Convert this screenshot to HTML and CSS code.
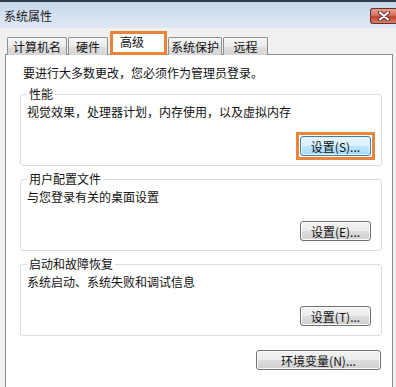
FILE: index.html
```html
<!DOCTYPE html>
<html lang="zh-CN">

<head>
    <meta charset="UTF-8">
    <meta name="viewport" content="width=device-width, initial-scale=1.0">
    <title>系统属性</title>
    <link rel="stylesheet" href="styles.css">
</head>

<body>
    <div class="window">
        <div class="titlebar">
            <span class="title">系统属性</span>
            <button class="close" type="button">
                <svg width="14" height="10" viewBox="0 0 14 10">
                    <path d="M3 1.5 L11 8.5 M11 1.5 L3 8.5" stroke="#5a2a26" stroke-width="4" stroke-linecap="round" />
                    <path d="M3 1.5 L11 8.5 M11 1.5 L3 8.5" stroke="#ffffff" stroke-width="2.2" stroke-linecap="round" />
                </svg>
            </button>
        </div>

        <div class="body">
            <div class="tabs">
                <div class="tab tab-name">计算机名</div>
                <div class="tab tab-hw">硬件</div>
                <div class="tab tab-adv active">高级</div>
                <div class="tab tab-prot">系统保护</div>
                <div class="tab tab-remote">远程</div>
            </div>

            <div class="panel">
                <p class="intro">要进行大多数更改，您必须作为管理员登录。</p>

                <fieldset class="group">
                    <legend>性能</legend>
                    <p class="desc">视觉效果，处理器计划，内存使用，以及虚拟内存</p>
                    <div class="actions">
                        <span class="focus-ring">
                            <button type="button" class="btn focused">设置(S)...</button>
                        </span>
                    </div>
                </fieldset>

                <fieldset class="group">
                    <legend>用户配置文件</legend>
                    <p class="desc">与您登录有关的桌面设置</p>
                    <div class="actions">
                        <button type="button" class="btn">设置(E)...</button>
                    </div>
                </fieldset>

                <fieldset class="group group-last">
                    <legend>启动和故障恢复</legend>
                    <p class="desc">系统启动、系统失败和调试信息</p>
                    <div class="actions">
                        <button type="button" class="btn">设置(T)...</button>
                    </div>
                </fieldset>

                <div class="env">
                    <button type="button" class="btn btn-wide">环境变量(N)...</button>
                </div>
            </div>
        </div>
    </div>
</body>

</html>
```

FILE: styles.css
```css
html, body {
    margin: 0;
    padding: 0;
}

body {
    font-family: "Noto Sans CJK SC", "Liberation Sans", sans-serif;
    font-size: 12px;
    color: #111;
    background: #f0f0f0;
    width: 396px;
    height: 387px;
    overflow: hidden;
}

.window {
    height: 387px;
    display: flex;
    flex-direction: column;
}

.titlebar {
    height: 26px;
    border-top: 2px solid #2c3b4c;
    background: linear-gradient(to bottom, #c6d7eb, #d6e3f2 60%, #dde8f4);
    display: flex;
    align-items: center;
    justify-content: space-between;
}

.title {
    padding-left: 4px;
    line-height: 16px;
    margin-top: 1px;
    color: #1c1c1c;
}

.close {
    width: 26px;
    height: 16px;
    margin-top: 2px;
    padding: 0;
    border: 1px solid #6b2f2a;
    border-right: none;
    border-radius: 3px 0 0 3px;
    background: linear-gradient(to bottom, #e6a08f, #d26f5c 45%, #c0432e 55%, #d5826b);
    display: flex;
    align-items: center;
    justify-content: center;
}

.body {
    flex: 1;
    display: flex;
    flex-direction: column;
    padding: 0 3px 0 5px;
}

.tabs {
    height: 27px;
    display: flex;
    align-items: flex-end;
    padding-left: 2px;
    margin-bottom: -1px;
    position: relative;
    z-index: 1;
}

.tab {
    height: 18px;
    box-sizing: border-box;
    border: 1px solid #8c8e94;
    border-bottom: none;
    border-radius: 2px 2px 0 0;
    background: linear-gradient(to bottom, #f6f6f6, #ebebeb 50%, #dedede 51%, #d6d6d6);
    line-height: 17px;
    text-align: center;
    white-space: nowrap;
}

.tab-name { width: 60px; }
.tab-hw { width: 40px; margin-left: 1px; }
.tab-adv { width: 57px; margin-left: 2px; }
.tab-prot { width: 54px; margin-left: 1px; }
.tab-remote { width: 45px; margin-left: 1px; }

.tab.active {
    height: 24px;
    border: 3px solid #e8843c;
    border-radius: 0;
    background: #ffffff;
    text-align: left;
    padding-left: 7px;
    line-height: 15px;
}

.panel {
    flex: 1;
    background: #ffffff;
    border: 1px solid #898c95;
    border-bottom: none;
    padding: 10px 10px 0 14px;
}

.intro {
    margin: 0 0 0 3px;
    line-height: 16px;
}

.group {
    margin: 6px 0 0;
    border: 1px solid #d5dfe5;
    border-radius: 3px;
    padding: 3px 10px 9px 6px;
    min-width: 0;
}

.group legend {
    padding: 0 2px;
    line-height: 14px;
}

.desc {
    margin: 0;
    line-height: 16px;
}

.actions {
    display: flex;
    justify-content: flex-end;
    margin-top: 16px;
}

.btn {
    display: block;
    width: 71px;
    height: 20px;
    padding: 0;
    font-family: inherit;
    font-size: 12px;
    color: #111;
    border: 1px solid #707070;
    border-radius: 3px;
    background: linear-gradient(to bottom, #f2f2f2, #ebebeb 50%, #dddddd 51%, #cfcfcf);
    box-shadow: inset 0 0 0 1px #fbfbfb;
    line-height: 17px;
}

/* highlight box drawn around the focused button */
.focus-ring {
    display: block;
    border: 3px solid #e8843c;
    padding: 1px;
    margin: -4px -4px -4px 0;
    background: #ffffff;
}

.btn.focused {
    border-color: #3c7fb1;
    background: linear-gradient(to bottom, #eaf6fd, #d9f0fc 50%, #bee6fd 51%, #a7d9f5);
    box-shadow: inset 0 0 0 1px #e6f4fc;
}

.env {
    display: flex;
    justify-content: flex-end;
    margin-top: 14px;
    padding-right: 1px;
}

.btn-wide {
    width: 125px;
}
```
